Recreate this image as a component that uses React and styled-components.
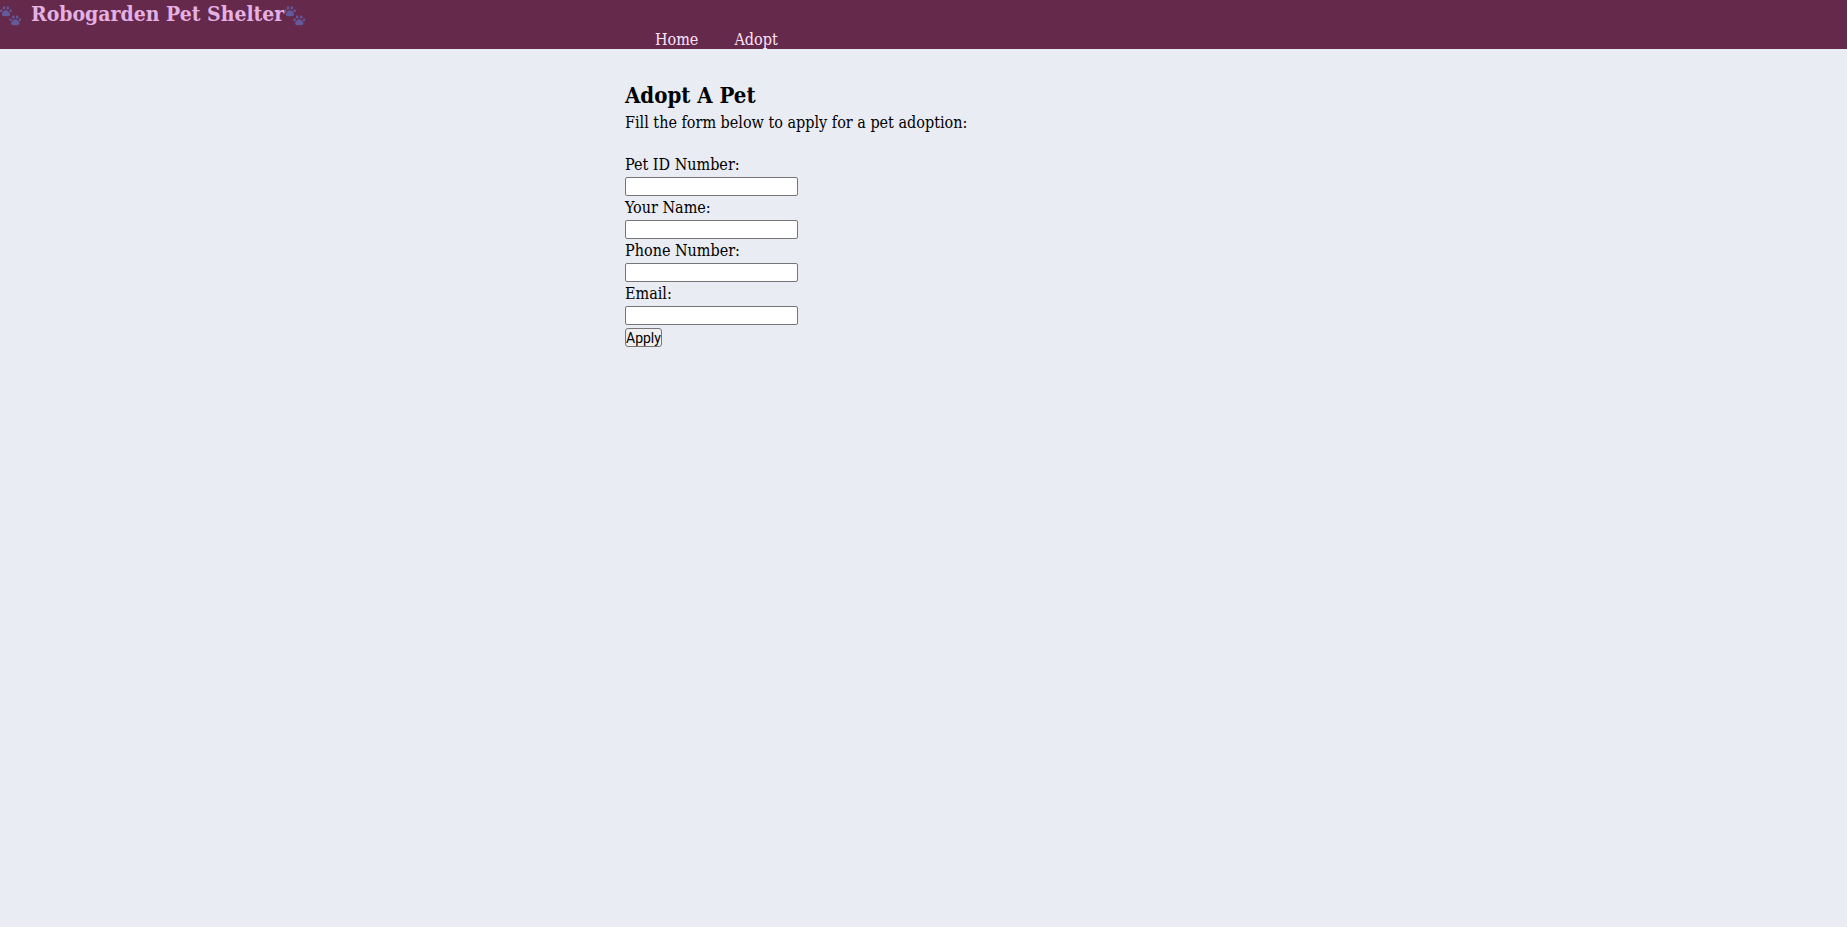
import React from "react";
import styled, { createGlobalStyle } from "styled-components";

const GlobalStyle = createGlobalStyle`
  * {
    box-sizing: border-box;
    margin: 0;
    padding: 0;
  }

  body {
    background: #e9ecf3;
    color: #000;
    font-family: "Roboto Slab", "DejaVu Serif Condensed", "DejaVu Serif", serif;
    font-size: 16px;
    line-height: 24px;
  }
`;

const Header = styled.header`
  background: #64294b;
`;

const Brand = styled.h1`
  display: flex;
  align-items: center;
  color: #e5b1e2;
  font-size: 21px;
  line-height: 28px;
  white-space: nowrap;
`;

const BrandName = styled.span`
  padding-left: 9px;
`;

const Paws = styled.svg`
  flex: none;
  width: 22px;
  height: 20px;
  margin-top: 3px;
  fill: #625a9c;
`;

const Column = styled.div`
  width: 100%;
  max-width: 597px;
  margin: 0 auto;
`;

const NavList = styled.ul`
  display: flex;
  gap: 36px;
  padding: 2px 0 0 30px;
  list-style: none;
`;

const NavLink = styled.a`
  display: block;
  color: #ffe3fa;
  line-height: 19px;
  text-decoration: none;
`;

const Main = styled.main`
  padding-top: 32px;
`;

const Title = styled.h2`
  margin-bottom: 2px;
  font-size: 22px;
  line-height: 28px;
`;

const Form = styled.form`
  display: flex;
  flex-direction: column;
  align-items: flex-start;
  padding-top: 18px;
`;

const Field = styled.div`
  display: flex;
  flex-direction: column;
`;

const Input = styled.input`
  width: 173px;
  height: 19px;
  padding: 0 1px;
  border: 1px solid #767676;
  border-radius: 2px;
  background: #fff;
  font: 13px "Liberation Sans", Arial, sans-serif;
`;

const SubmitButton = styled.button`
  height: 19px;
  margin-top: 3px;
  border: 1px solid #767676;
  border-radius: 3px;
  background: #efefef;
  color: #000;
  font: 14px Roboto, "Liberation Sans", Arial, sans-serif;
`;

const navItems = ["Home", "Adopt"];

const fields = [
  { id: "pet-id", label: "Pet ID Number:", type: "text" },
  { id: "name", label: "Your Name:", type: "text" },
  { id: "phone", label: "Phone Number:", type: "tel" },
  { id: "email", label: "Email:", type: "email" },
];

function Paw({ x, y }) {
  return (
    <g transform={`translate(${x} ${y})`}>
      <ellipse cx="1.3" cy="4.8" rx="1.2" ry="1.5" transform="rotate(-20 1.3 4.8)" />
      <ellipse cx="4" cy="1.9" rx="1.3" ry="1.7" />
      <ellipse cx="7.9" cy="1.9" rx="1.3" ry="1.7" />
      <ellipse cx="10.7" cy="4.8" rx="1.2" ry="1.5" transform="rotate(20 10.7 4.8)" />
      <path d="M6 4.2C4.2 4.2 3.6 5.6 2.6 6.6C1.2 8.2 1.9 10.3 3.9 10.3C4.8 10.3 5.2 10 6 10C6.8 10 7.2 10.3 8.1 10.3C10.1 10.3 10.8 8.2 9.4 6.6C8.4 5.6 7.8 4.2 6 4.2Z" />
    </g>
  );
}

function PawPrints() {
  return (
    <Paws viewBox="0 0 22 20" aria-hidden="true">
      <Paw x={0} y={0} />
      <Paw x={9.3} y={9} />
    </Paws>
  );
}

export default function App() {
  return (
    <>
      <GlobalStyle />
      <Header>
        <Brand>
          <PawPrints />
          <BrandName>Robogarden Pet Shelter</BrandName>
          <PawPrints />
        </Brand>
        <Column as="nav">
          <NavList>
            {navItems.map((item) => (
              <li key={item}>
                <NavLink href={`#${item.toLowerCase()}`}>{item}</NavLink>
              </li>
            ))}
          </NavList>
        </Column>
      </Header>
      <Main>
        <Column>
          <Title>Adopt A Pet</Title>
          <p>Fill the form below to apply for a pet adoption:</p>
          <Form onSubmit={(event) => event.preventDefault()}>
            {fields.map(({ id, label, type }) => (
              <Field key={id}>
                <label htmlFor={id}>{label}</label>
                <Input id={id} name={id} type={type} />
              </Field>
            ))}
            <SubmitButton type="submit">Apply</SubmitButton>
          </Form>
        </Column>
      </Main>
    </>
  );
}
